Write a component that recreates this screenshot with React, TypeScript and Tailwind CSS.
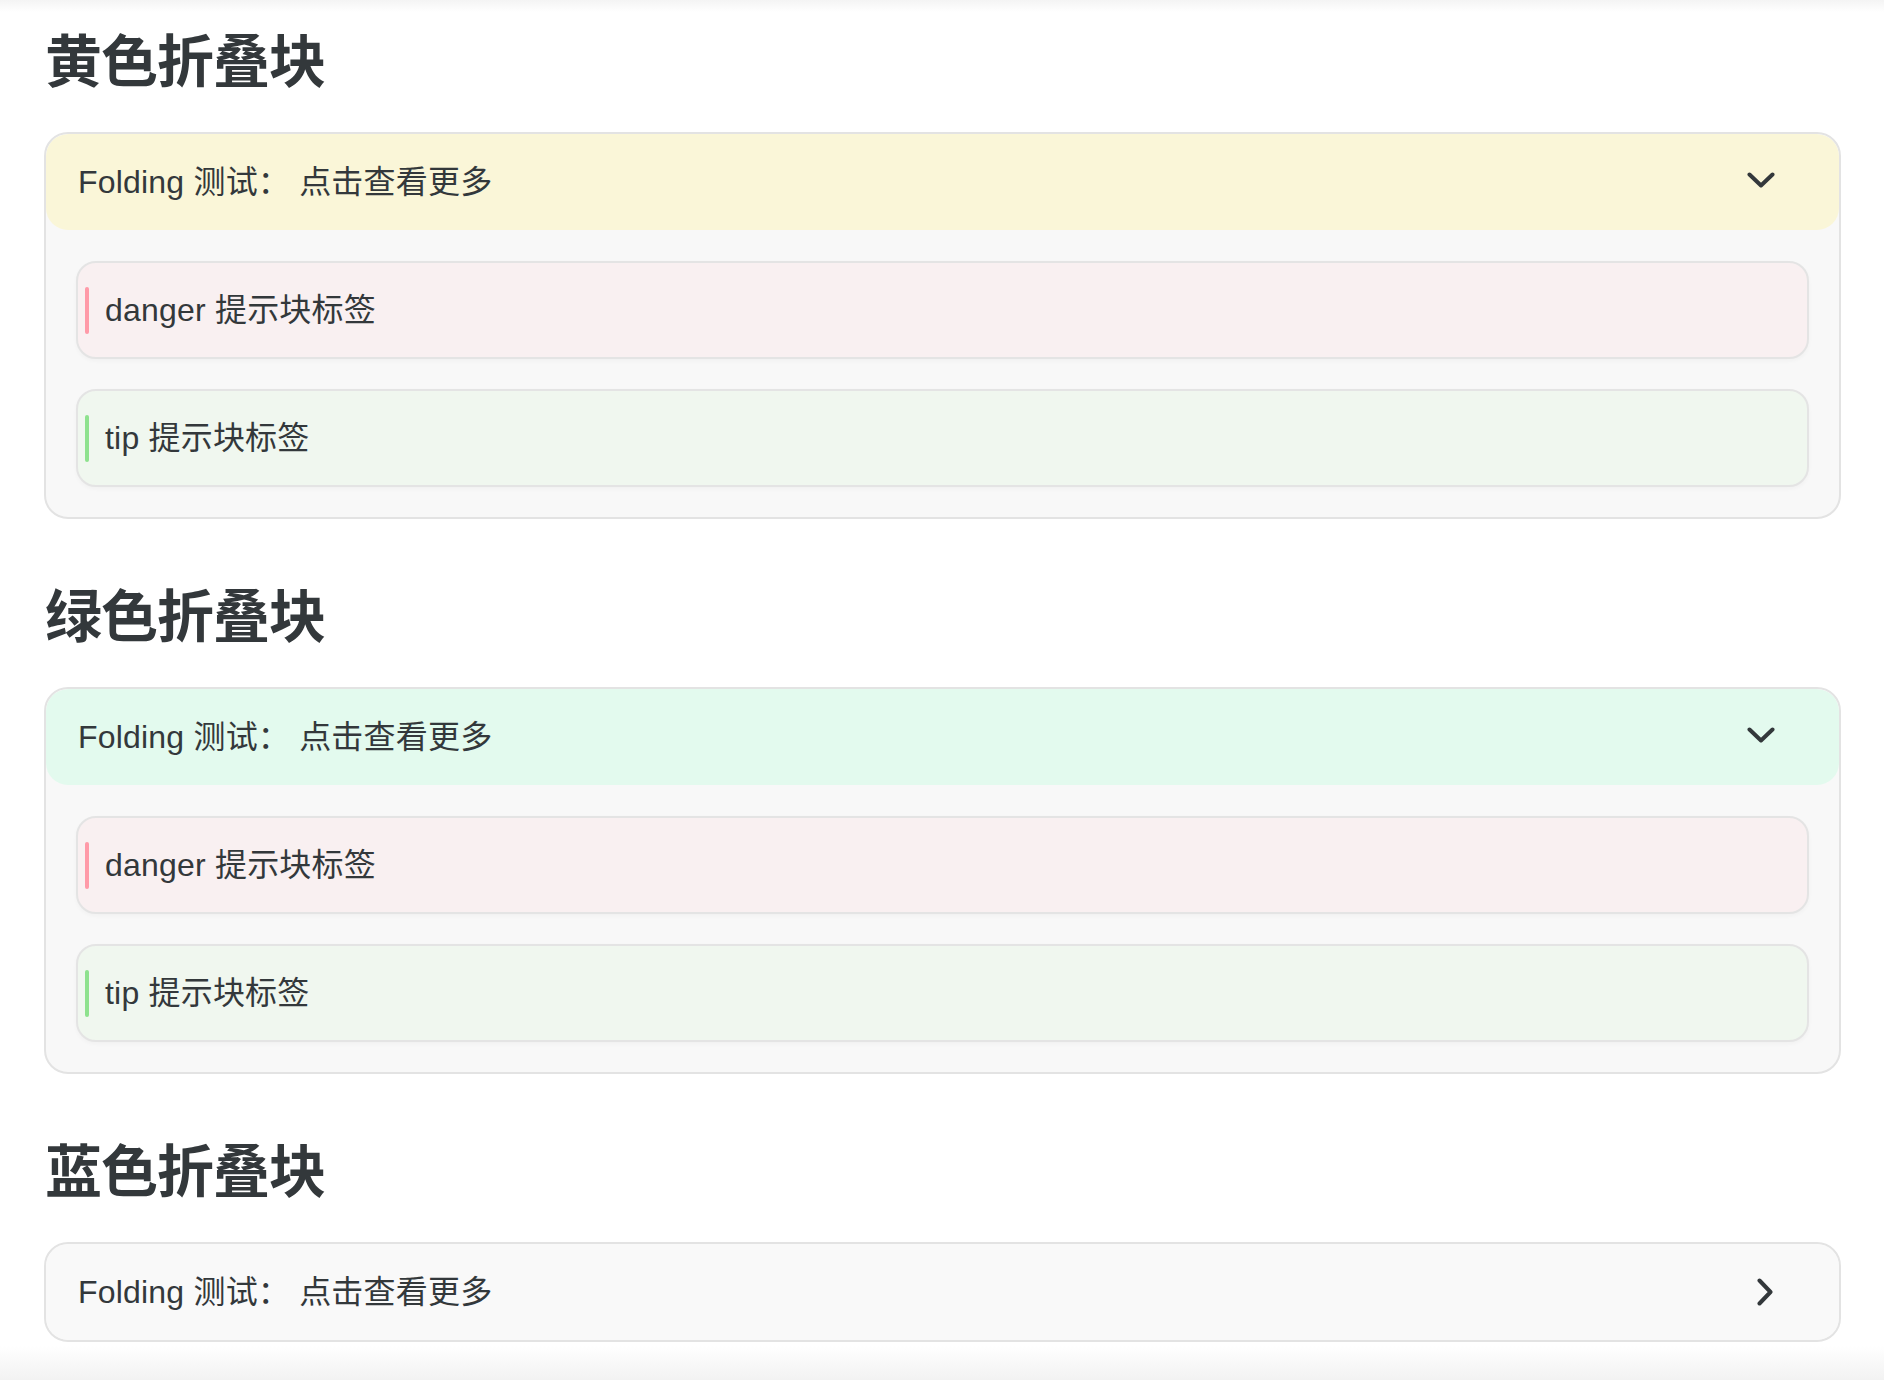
import React from "react";

type Note = { kind: "danger" | "tip"; label: string };

const notes: Note[] = [
  { kind: "danger", label: "danger 提示块标签" },
  { kind: "tip", label: "tip 提示块标签" },
];

const font = { fontFamily: '"Liberation Sans", "Noto Sans CJK SC", sans-serif' };

const ChevronDown = () => (
  <svg width="28" height="16" viewBox="0 0 28 16" className="mr-[64px] mb-[5px] shrink-0">
    <polyline
      points="2.5,2.5 14,13.5 25.5,2.5"
      fill="none"
      stroke="#33383b"
      strokeWidth="4"
      strokeLinecap="round"
      strokeLinejoin="round"
    />
  </svg>
);

const ChevronRight = () => (
  <svg width="16" height="28" viewBox="0 0 16 28" className="mr-[66px] shrink-0">
    <polyline
      points="2.5,2.5 13.5,14 2.5,25.5"
      fill="none"
      stroke="#33383b"
      strokeWidth="4"
      strokeLinecap="round"
      strokeLinejoin="round"
    />
  </svg>
);

const NoteBox = ({ note }: { note: Note }) => {
  const danger = note.kind === "danger";
  return (
    <div
      className={`flex items-center h-[98px] rounded-[20px] border-2 border-[#e4e4e4] shadow-[0_2px_4px_rgba(0,0,0,0.03)] ${
        danger ? "bg-[#f9f0f1]" : "bg-[#f0f7ef]"
      }`}
    >
      <div
        className={`ml-[7px] w-[4px] h-[47px] rounded-full ${
          danger ? "bg-[#ff9aa8]" : "bg-[#8ee28e]"
        }`}
      />
      <div className="ml-[16px] text-[32px] leading-none text-[#33383b] tracking-[0.2px]">{note.label}</div>
    </div>
  );
};

const Folding = ({ title, tone, open }: { title: string; tone: "yellow" | "green" | "blue"; open: boolean }) => {
  const headBg =
    tone === "yellow" ? "bg-[#faf6d8]" : tone === "green" ? "bg-[#e3faee]" : "bg-[#f9f9f9]";
  return (
    <section>
      <h2 className="pl-[1px] pt-[4px] text-[57px] leading-[73px] font-bold text-[#33383b] tracking-[-1px]">
        {title}
      </h2>
      <div className="mt-[33px] rounded-[24px] border-2 border-[#e3e3e3] bg-[#f8f8f8] overflow-hidden">
        <div className={`flex items-center justify-between h-[96px] pl-[32px] rounded-[22px] ${headBg}`}>
          <span className="text-[32px] leading-none text-[#33383b] tracking-[0.2px]">
            Folding 测试： 点击查看更多
          </span>
          {open ? <ChevronDown /> : <ChevronRight />}
        </div>
        {open && (
          <div className="flex flex-col gap-[30px] px-[30px] pt-[31px] pb-[30px]">
            {notes.map((n) => (
              <NoteBox key={n.kind} note={n} />
            ))}
          </div>
        )}
      </div>
    </section>
  );
};

export default function App() {
  return (
    <div className="w-[1884px] h-[1380px] bg-white flex flex-col overflow-hidden" style={font}>
      <div className="h-[12px] bg-gradient-to-b from-[#f4f4f4] to-white shrink-0" />
      <main className="flex flex-col gap-[58px] pl-[44px] pr-[43px] pt-[10px]">
        <Folding title="黄色折叠块" tone="yellow" open />
        <Folding title="绿色折叠块" tone="green" open />
        <Folding title="蓝色折叠块" tone="blue" open={false} />
      </main>
      <div className="mt-auto h-[34px] bg-gradient-to-b from-white to-[#f2f2f2] shrink-0" />
    </div>
  );
}
